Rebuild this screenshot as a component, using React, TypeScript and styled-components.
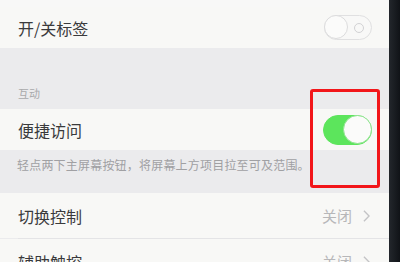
import styled, { createGlobalStyle } from "styled-components";

const GlobalStyle = createGlobalStyle`
  html, body {
    margin: 0;
    padding: 0;
    width: 400px;
    height: 262px;
    overflow: hidden;
    background: #15181c;
  }
  body {
    font-family: "Noto Sans CJK SC", "Noto Sans", sans-serif;
  }
`;

const App = () => {
  return (
    <>
      <GlobalStyle />
      <Frame>
        <Screen>
          <TopCell>
            <Row>
              <Label>开/关标签</Label>
              <Switch on={false}>
                <Knob on={false} />
                <OffMark />
              </Switch>
            </Row>
          </TopCell>

          <GroupHeader>互动</GroupHeader>

          <Row>
            <Label>便捷访问</Label>
            <Switch on>
              <Knob on />
            </Switch>
          </Row>
          <GroupFooter>轻点两下主屏幕按钮，将屏幕上方项目拉至可及范围。</GroupFooter>

          <Row tall>
            <Label>切换控制</Label>
            <Detail>
              关闭
              <Chevron viewBox="0 0 8 14">
                <path d="M1 1l6 6-6 6" fill="none" stroke="#c4c4c6" strokeWidth="1.6" />
              </Chevron>
            </Detail>
          </Row>
          <Divider />
          <Row tall>
            <Label>辅助触控</Label>
            <Detail>
              关闭
              <Chevron viewBox="0 0 8 14">
                <path d="M1 1l6 6-6 6" fill="none" stroke="#c4c4c6" strokeWidth="1.6" />
              </Chevron>
            </Detail>
          </Row>

          <Highlight />
        </Screen>
        <Bezel />
      </Frame>
    </>
  );
};

const Frame = styled.div`
  display: flex;
  width: 400px;
  height: 262px;
  overflow: hidden;
`;

const Screen = styled.div`
  position: relative;
  flex: 1;
  display: flex;
  flex-direction: column;
  background: #ebebed;
`;

const Bezel = styled.div`
  width: 11px;
  background: linear-gradient(90deg, #23272c, #101317);
`;

const TopCell = styled.div`
  background: #f8f8f7;
  padding-top: 7px;
`;

const Row = styled.div<{ tall?: boolean }>`
  display: flex;
  align-items: center;
  justify-content: space-between;
  height: ${props => (props.tall ? "45px" : "41px")};
  padding: 0 18px 0 18px;
  background: #f8f8f6;
  flex-shrink: 0;
`;

const Label = styled.span`
  font-size: 16px;
  color: #3a3a3c;
`;

const GroupHeader = styled.div`
  height: 61px;
  display: flex;
  align-items: flex-end;
  padding: 0 18px 8px;
  box-sizing: border-box;
  font-size: 11px;
  color: #a9a9ab;
  flex-shrink: 0;
`;

const GroupFooter = styled.div`
  height: 43px;
  padding: 6px 0 0 17px;
  box-sizing: border-box;
  font-size: 12px;
  letter-spacing: 0.2px;
  color: #a0a0a3;
  white-space: nowrap;
  flex-shrink: 0;
`;

const Switch = styled.div<{ on: boolean }>`
  position: relative;
  width: ${props => (props.on ? "49px" : "48px")};
  height: ${props => (props.on ? "30px" : "25px")};
  margin-right: -1px;
  border-radius: 16px;
  box-sizing: border-box;
  background: ${props => (props.on ? "#5ce55c" : "#f8f8f7")};
  border: 1.5px solid ${props => (props.on ? "#5ce55c" : "#e0e0e1")};
`;

const Knob = styled.div<{ on: boolean }>`
  position: absolute;
  top: -1px;
  ${props => (props.on ? "right: -1px;" : "left: -1px;")}
  width: ${props => (props.on ? "29px" : "24px")};
  height: ${props => (props.on ? "29px" : "24px")};
  border-radius: 50%;
  box-sizing: border-box;
  background: #fbfbfa;
  border: 1.5px solid ${props => (props.on ? "#8ee38e" : "#dcdcdd")};
`;

const OffMark = styled.div`
  position: absolute;
  right: 7px;
  top: 50%;
  width: 8px;
  height: 8px;
  margin-top: -5px;
  border-radius: 50%;
  border: 1.5px solid #d2d2d4;
`;

const Detail = styled.span`
  display: flex;
  align-items: center;
  gap: 11px;
  font-size: 15px;
  color: #b7b7b9;
  margin-right: 1px;
`;

const Chevron = styled.svg`
  width: 7px;
  height: 12px;
`;

const Divider = styled.div`
  height: 1px;
  margin-left: 18px;
  background: #e4e4e6;
  flex-shrink: 0;
`;

const Highlight = styled.div`
  position: absolute;
  left: 310px;
  top: 89px;
  width: 70px;
  height: 99px;
  box-sizing: border-box;
  border: 3px solid #f2161a;
  border-radius: 3px;
`;

export default App;
